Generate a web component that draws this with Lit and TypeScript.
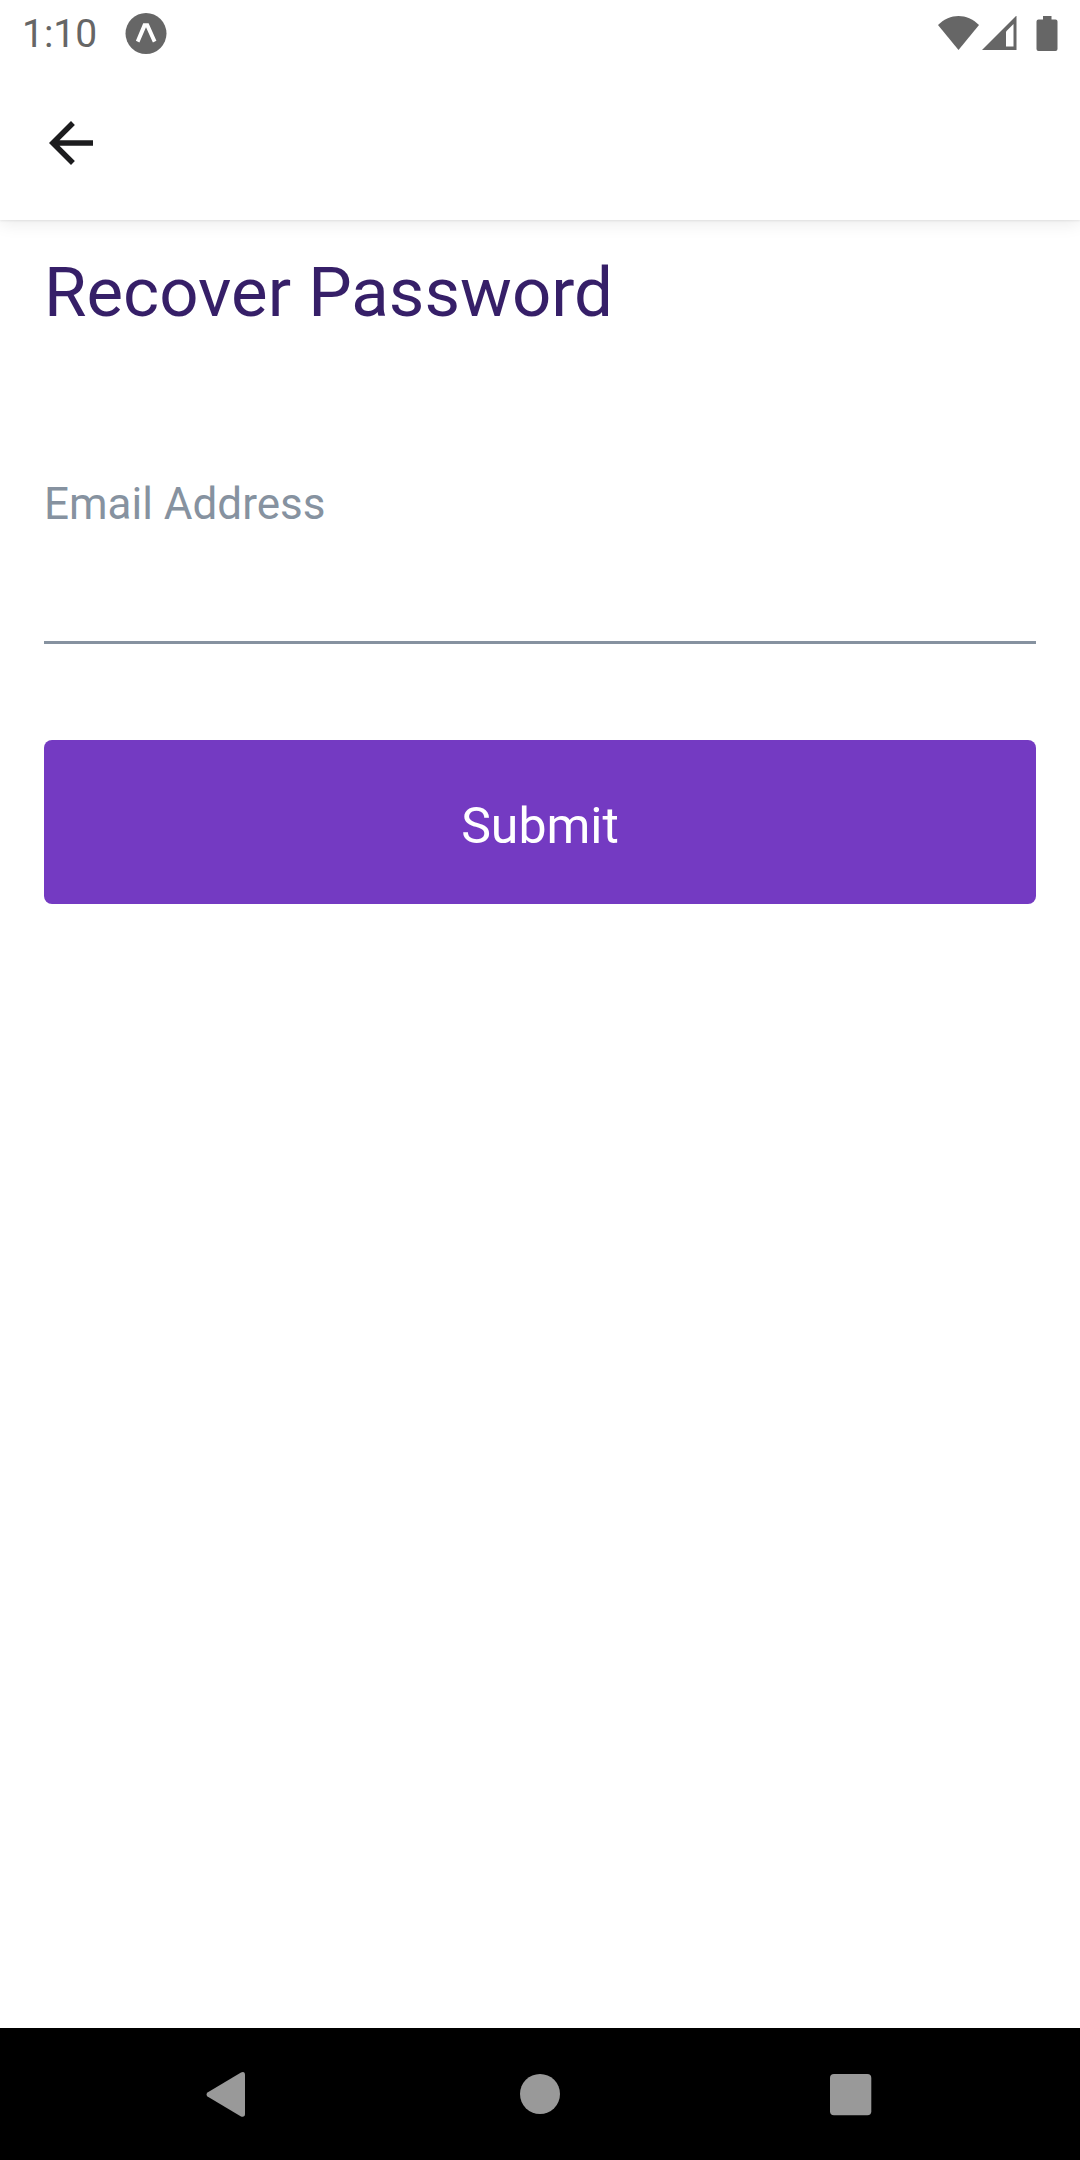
import { LitElement, html, css } from "lit";
import { customElement, state } from "lit/decorators.js";

@customElement("status-bar")
class StatusBar extends LitElement {
  static styles = css`
    :host {
      box-sizing: border-box;
      display: flex;
      align-items: center;
      justify-content: space-between;
      height: 66px;
      padding: 2px 20px 0 22px;
      color: #666;
      font-size: 39px;
      line-height: 48px;
    }
    .group {
      display: flex;
      align-items: center;
    }
    .left {
      gap: 28px;
    }
    svg {
      display: block;
      fill: currentColor;
    }
    .battery {
      margin-left: 18px;
    }
    .cut {
      fill: #fff;
    }
  `;

  render() {
    return html`
      <div class="group left">
        <time>1:10</time>
        <svg width="42" height="42" viewBox="0 0 42 42" aria-hidden="true">
          <circle cx="21" cy="20.500" r="20.5" />
          <path class="cut" d="M18.200 10.200h5.400l7.800 17.600-3.500 1.600L21 14.300 14.400 29.400 10.900 27.800z" />
        </svg>
      </div>
      <div class="group">
        <svg width="44" height="36" viewBox="0 0 44 36" aria-hidden="true">
          <path d="M0 9C12-3 29-3 41 9L20.500 34z" />
        </svg>
        <svg width="36" height="36" viewBox="0 0 36 36" aria-hidden="true">
          <path d="M0 34L34.500 -.5V34z" />
          <path class="cut" d="M24 15.500L31.500 8V30.500H24z" />
        </svg>
        <svg class="battery" width="24" height="36" viewBox="0 0 24 36" aria-hidden="true">
          <path d="M7 -.5h8.500v4h4q2 0 2 2v27.500q0 2-2 2h-17q-2 0-2-2V5.500q0-2 2-2h4.500z" />
        </svg>
      </div>
    `;
  }
}

@customElement("app-header")
class AppHeader extends LitElement {
  static styles = css`
    :host {
      display: flex;
      align-items: center;
      height: 154px;
      padding: 0 38px;
      box-shadow:
        0 1px 2px rgba(0, 0, 0, 0.08),
        0 4px 16px rgba(0, 0, 0, 0.08);
      clip-path: inset(0 0 -24px 0);
    }
    .back {
      padding: 0;
      border: 0;
      background: none;
      color: #1c1c1e;
      cursor: pointer;
    }
    svg {
      display: block;
      fill: currentColor;
    }
  `;

  render() {
    return html`
      <button class="back" type="button" aria-label="Back">
        <svg width="66" height="66" viewBox="0 0 24 24" aria-hidden="true">
          <path d="M20 11H7.830l5.590-5.590L12 4l-8 8 8 8 1.410-1.410L7.830 13H20z" />
        </svg>
      </button>
    `;
  }
}

@customElement("recover-form")
class RecoverForm extends LitElement {
  static styles = css`
    :host {
      display: block;
      padding: 33px 44px;
    }
    .title {
      margin: 0 0 131px;
      color: #361f68;
      font-size: 69px;
      font-weight: 400;
      line-height: 80px;
    }
    .form {
      display: flex;
      flex-direction: column;
    }
    .label {
      color: #8692a0;
      font-size: 44px;
      line-height: 80px;
    }
    .field {
      box-sizing: border-box;
      width: 100%;
      height: 100px;
      margin: 0 0 96px;
      padding: 0;
      border: 0;
      border-bottom: 3px solid #8692a0;
      border-radius: 0;
      outline: none;
      background: none;
      color: #361f68;
      font: inherit;
      font-size: 44px;
    }
    .submit {
      height: 164px;
      padding: 8px 0 0;
      border: 0;
      border-radius: 8px;
      background: #743ac2;
      color: #fff;
      font: inherit;
      font-size: 50px;
      line-height: 60px;
      cursor: pointer;
    }
  `;

  @state() private email = "";

  private onInput(e: Event) {
    this.email = (e.target as HTMLInputElement).value;
  }

  render() {
    return html`
      <h1 class="title">Recover Password</h1>
      <form class="form" @submit=${(e: Event) => e.preventDefault()}>
        <label class="label" for="email">Email Address</label>
        <input class="field" id="email" type="email" .value=${this.email} @input=${this.onInput} />
        <button class="submit" type="submit">Submit</button>
      </form>
    `;
  }
}

@customElement("navigation-bar")
class NavigationBar extends LitElement {
  static styles = css`
    :host {
      display: grid;
      grid-template-columns: repeat(3, 1fr);
      height: 132px;
      padding: 0 72px;
      background: #000;
    }
    .key {
      display: flex;
      align-items: center;
      justify-content: center;
      padding: 0;
      border: 0;
      background: none;
      color: #999;
      cursor: pointer;
    }
    svg {
      fill: currentColor;
    }
  `;

  render() {
    return html`
      <button class="key" type="button" aria-label="Back">
        <svg width="48" height="48" viewBox="0 0 48 48" aria-hidden="true">
          <path d="M3.500 22.500 37 2.500Q41 1 41 5V44Q41 47.500 37 46.500L3.500 26.500Q1.500 24.500 3.500 22.500z" />
        </svg>
      </button>
      <button class="key" type="button" aria-label="Home">
        <svg width="48" height="48" viewBox="0 0 48 48" aria-hidden="true">
          <circle cx="24" cy="24" r="20" />
        </svg>
      </button>
      <button class="key" type="button" aria-label="Overview">
        <svg width="48" height="48" viewBox="0 0 48 48" aria-hidden="true">
          <rect x="2" y="4" width="41.300" height="41.300" rx="4" />
        </svg>
      </button>
    `;
  }
}

@customElement("app-root")
class AppRoot extends LitElement {
  static styles = css`
    :host {
      display: flex;
      flex-direction: column;
      min-height: 100vh;
      background: #fff;
      font-family: Roboto, "Liberation Sans", sans-serif;
    }
    .main {
      flex: 1;
    }
  `;

  render() {
    return html`
      <status-bar></status-bar>
      <app-header></app-header>
      <main class="main"><recover-form></recover-form></main>
      <navigation-bar></navigation-bar>
    `;
  }
}
